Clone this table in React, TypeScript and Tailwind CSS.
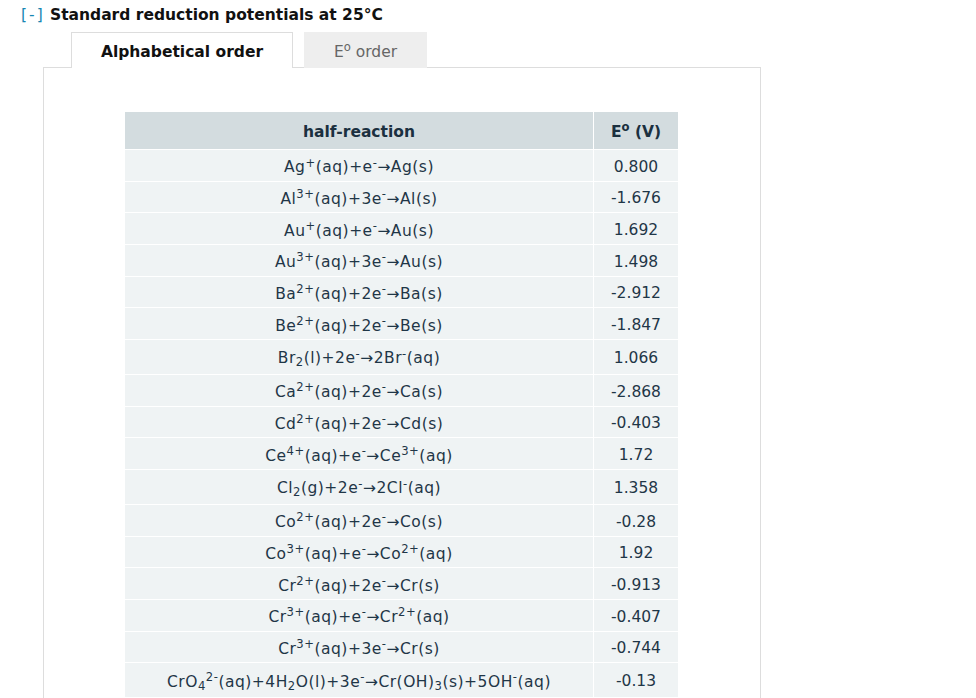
import React from "react";

const rows: [string, string][] = [
  ["Ag^{+}(aq)+e^{-}→Ag(s)", "0.800"],
  ["Al^{3+}(aq)+3e^{-}→Al(s)", "-1.676"],
  ["Au^{+}(aq)+e^{-}→Au(s)", "1.692"],
  ["Au^{3+}(aq)+3e^{-}→Au(s)", "1.498"],
  ["Ba^{2+}(aq)+2e^{-}→Ba(s)", "-2.912"],
  ["Be^{2+}(aq)+2e^{-}→Be(s)", "-1.847"],
  ["Br_{2}(l)+2e^{-}→2Br^{-}(aq)", "1.066"],
  ["Ca^{2+}(aq)+2e^{-}→Ca(s)", "-2.868"],
  ["Cd^{2+}(aq)+2e^{-}→Cd(s)", "-0.403"],
  ["Ce^{4+}(aq)+e^{-}→Ce^{3+}(aq)", "1.72"],
  ["Cl_{2}(g)+2e^{-}→2Cl^{-}(aq)", "1.358"],
  ["Co^{2+}(aq)+2e^{-}→Co(s)", "-0.28"],
  ["Co^{3+}(aq)+e^{-}→Co^{2+}(aq)", "1.92"],
  ["Cr^{2+}(aq)+2e^{-}→Cr(s)", "-0.913"],
  ["Cr^{3+}(aq)+e^{-}→Cr^{2+}(aq)", "-0.407"],
  ["Cr^{3+}(aq)+3e^{-}→Cr(s)", "-0.744"],
  ["CrO_{4}^{2-}(aq)+4H_{2}O(l)+3e^{-}→Cr(OH)_{3}(s)+5OH^{-}(aq)", "-0.13"],
];

function Formula({ text }: { text: string }) {
  const parts = text.split(/(\^\{[^}]*\}|_\{[^}]*\})/).filter(Boolean);
  return (
    <>
      {parts.map((p, i) => {
        if (p.startsWith("^{")) return <sup key={i}>{p.slice(2, -1)}</sup>;
        if (p.startsWith("_{")) return <sub key={i}>{p.slice(2, -1)}</sub>;
        return <React.Fragment key={i}>{p}</React.Fragment>;
      })}
    </>
  );
}

export default function App() {
  return (
    <div
      className="min-h-[698px] bg-white text-[15.5px]"
      style={{ fontFamily: '"DejaVu Sans", Verdana, sans-serif' }}
    >
      <div className="h-[32px] pt-[5px] pl-[21px] leading-[20px] flex">
        <span className="text-[#1787b3] tracking-[2px] w-[29px]">[-]</span>
        <span className="font-bold text-[#111]">Standard reduction potentials at 25°C</span>
      </div>
      <div className="ml-[43px] w-[718px]">
        <div className="flex h-[35px] pl-[28px] gap-[11px]">
          <div className="relative z-10 w-[222px] h-[36px] border border-b-0 border-[#dddddd] bg-white pt-[9px] leading-[20px] text-center font-bold text-[#111]">
            Alphabetical order
          </div>
          <div className="w-[123px] h-[36px] bg-[#eeeeee] pt-[10px] leading-[20px] text-center text-[#666]">
            E<sup>o</sup> order
          </div>
        </div>
        <div className="border border-[#dddddd] pt-[44px] pb-[40px] pl-[81px]">
          <div className="grid grid-cols-[468px_84px] gap-px w-[553px] text-[#1f3647]">
            <div className="h-[37px] pt-[4px] bg-[#d3dcdf] flex items-center justify-center font-bold text-[#1b3040]">
              half-reaction
            </div>
            <div className="h-[37px] pt-[4px] bg-[#d3dcdf] flex items-center justify-center font-bold text-[#1b3040]">
              <span>
                E<sup>o</sup> (V)
              </span>
            </div>
            {rows.map(([f, v], i) => {
              const tall = f.includes("_{");
              return (
                <React.Fragment key={i}>
                  <div
                    className={
                      tall
                        ? "h-[34px] pt-[3px] bg-[#eff3f4] flex items-center justify-center"
                        : "h-[30.67px] pt-[4px] bg-[#eff3f4] flex items-center justify-center"
                    }
                  >
                    <span className="leading-[20px] tracking-[0.5px]">
                      <Formula text={f} />
                    </span>
                  </div>
                  <div
                    className={
                      tall
                        ? "h-[34px] pt-[3px] bg-[#eff3f4] flex items-center justify-center"
                        : "h-[30.67px] pt-[4px] bg-[#eff3f4] flex items-center justify-center"
                    }
                  >
                    {v}
                  </div>
                </React.Fragment>
              );
            })}
          </div>
        </div>
      </div>
    </div>
  );
}
